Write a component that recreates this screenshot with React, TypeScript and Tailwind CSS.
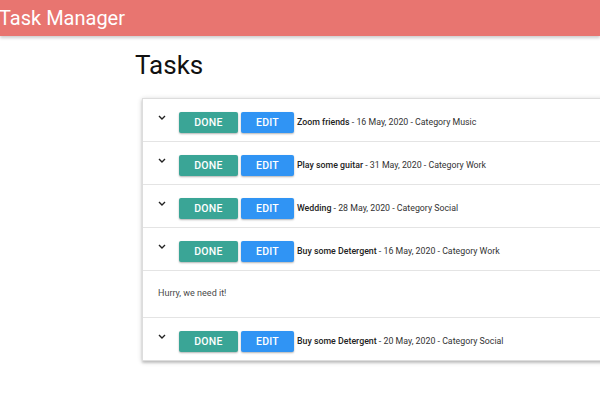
import React, { useState } from 'react';

interface Task {
  id: number;
  title: string;
  date: string;
  category: string;
  note?: string;
}

const tasks: Task[] = [
  { id: 1, title: 'Zoom friends', date: '16 May, 2020', category: 'Music' },
  { id: 2, title: 'Play some guitar', date: '31 May, 2020', category: 'Work' },
  { id: 3, title: 'Wedding', date: '28 May, 2020', category: 'Social' },
  { id: 4, title: 'Buy some Detergent', date: '16 May, 2020', category: 'Work', note: 'Hurry, we need it!' },
  { id: 5, title: 'Buy some Detergent', date: '20 May, 2020', category: 'Social' },
];

function Chevron() {
  return (
    <svg width="8" height="5" viewBox="0 0 8 5" className="shrink-0">
      <path d="M1 1 L4 4 L7 1" fill="none" stroke="#222" strokeWidth="1.4" />
    </svg>
  );
}

function TaskRow({ task, open, onToggle }: { task: Task; open: boolean; onToggle: () => void }) {
  return (
    <li className="border-b border-[#e4e4e4] last:border-b-0">
      <div className="flex h-[42px] items-start pl-[15px] cursor-pointer" onClick={onToggle}>
        <div className="pt-[16px]">
          <Chevron />
        </div>
        <div className="flex items-center pt-[13px] ml-[13px]">
          <button className="h-[21px] w-[59px] rounded-[2px] bg-[#3aa596] text-white text-[10.5px] font-medium tracking-wide shadow-[0_1px_2px_rgba(0,0,0,0.3)]">
            DONE
          </button>
          <button className="ml-[3px] h-[21px] w-[53px] rounded-[2px] bg-[#3094f4] text-white text-[10.5px] font-medium tracking-wide shadow-[0_1px_2px_rgba(0,0,0,0.3)]">
            EDIT
          </button>
          <span className="ml-[3px] text-[8.8px] text-[#333] whitespace-nowrap">
            <span className="font-medium text-[#222]">{task.title}</span>
            {' - '}{task.date}{' - Category '}{task.category}
          </span>
        </div>
      </div>
      {open && task.note && (
        <div className="flex h-[47px] items-center border-t border-[#e4e4e4] pl-[15px] text-[9px] text-[#4a4a4a]">
          {task.note}
        </div>
      )}
    </li>
  );
}

export default function App() {
  const [openId, setOpenId] = useState<number | null>(4);

  return (
    <div className="w-[600px] h-[400px] overflow-hidden bg-white" style={{ fontFamily: 'Roboto, "Liberation Sans", sans-serif' }}>
      {/* Header */}
      <nav className="h-[36px] bg-[#e87570] flex items-center shadow-[0_2px_3px_rgba(0,0,0,0.2)]">
        <span className="text-white text-[20px] leading-none -ml-[1px]">Task Manager</span>
      </nav>

      <div className="pl-[135px]">
        <h1 className="text-[26px] text-[#111] leading-none mt-[16px]">Tasks</h1>

        {/* Task list */}
        <ul className="mt-[20px] ml-[7px] w-[480px] border border-[#ddd] bg-white shadow-[0_2px_2px_rgba(0,0,0,0.14),0_1px_5px_rgba(0,0,0,0.2)]">
          {tasks.map((task) => (
            <TaskRow
              key={task.id}
              task={task}
              open={openId === task.id}
              onToggle={() => setOpenId(openId === task.id ? null : task.id)}
            />
          ))}
        </ul>
      </div>
    </div>
  );
}
